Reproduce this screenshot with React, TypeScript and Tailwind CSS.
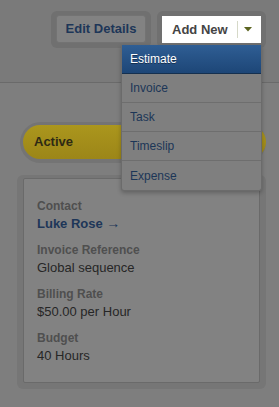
import { useState } from 'react';

const menuItems = ['Estimate', 'Invoice', 'Task', 'Timeslip', 'Expense'];

const details = [
  { label: 'Invoice Reference', value: 'Global sequence' },
  { label: 'Billing Rate', value: '$50.00 per Hour' },
  { label: 'Budget', value: '40 Hours' },
];

export default function App() {
  const [active] = useState('Estimate');

  return (
    <div className="w-[279px] h-[407px] overflow-hidden bg-[#7e7e7e] font-['Liberation_Sans',Arial,sans-serif]">
      {/* Header with actions */}
      <div className="relative h-[83px] bg-[#7a7a7a] border-b border-[#6a6a6a]">
        <div className="flex justify-end gap-[6px] pt-[11px] pr-[13px]">
          <div className="rounded-[6px] bg-[#707070] p-[5px] pt-[4px]">
            <button className="h-[28px] w-[90px] rounded-[3px] border border-[#737373] bg-[#828282] text-[13px] font-bold text-[#1d3658]">
              Edit Details
            </button>
          </div>
          <div className="rounded-[6px] bg-[#707070] p-[5px]">
            <div className="flex h-[27px] w-[99px] items-center bg-white">
              <span className="pl-[10px] text-[13px] font-bold text-[#444]">Add New</span>
              <span className="ml-[9px] h-[17px] w-px bg-[#d6d9c8]" />
              <svg className="ml-[6px]" width="8" height="5" viewBox="0 0 8 5">
                <path d="M0 0h8L4 4.5z" fill="#5b6420" />
              </svg>
            </div>
          </div>
        </div>

        {/* Dropdown menu */}
        <div className="absolute left-[121px] top-[45px] z-10 w-[141px] rounded-b-[3px] border border-t-0 border-[#6b6b6b] bg-[#7f7f7f] shadow-[0_2px_4px_rgba(0,0,0,0.25)]">
          {menuItems.map((item) =>
            item === active ? (
              <div
                key={item}
                className="flex h-[29px] items-center border-b border-[#15304f] bg-gradient-to-b from-[#2f5e94] to-[#1d4677] pl-[8px] text-[12px] text-white [text-shadow:0_1px_0_rgba(0,0,0,0.4)]"
              >
                {item}
              </div>
            ) : (
              <div
                key={item}
                className="flex h-[29px] items-center border-b border-[#6e6e6e] pl-[8px] text-[12px] text-[#1c3657] last:border-b-0"
              >
                {item}
              </div>
            )
          )}
        </div>
      </div>

      <div className="pl-[17px] pr-[13px] pt-[39px]">
        {/* Status pill */}
        <div className="ml-[3px] rounded-full bg-[#747474] p-[3px] pb-[4px] pr-0">
          <div className="flex h-[34px] items-center rounded-full bg-gradient-to-b from-[#ab961d] to-[#9c8618] pl-[11px] text-[13px] font-bold text-[#2e2a14]">
            Active
          </div>
        </div>

        {/* Project details card */}
        <div className="mt-[12px] rounded-[6px] bg-[#767676] p-[6px] pt-[3px]">
          <div className="h-[205px] rounded-[2px] border border-[#6a6a6a] bg-[#828282] px-[13px] pt-[19px] leading-[17px]">
            <div className="text-[12px] font-bold text-[#4f4f4f]">Contact</div>
            <div className="text-[13px] font-bold text-[#1d3658]">
              Luke Rose <span className="text-[14px]">→</span>
            </div>
            {details.map((d) => (
              <div key={d.label} className="mt-[10px]">
                <div className="text-[12px] font-bold text-[#4f4f4f]">{d.label}</div>
                <div className="text-[13px] text-[#262626]">{d.value}</div>
              </div>
            ))}
          </div>
        </div>
      </div>
    </div>
  );
}
